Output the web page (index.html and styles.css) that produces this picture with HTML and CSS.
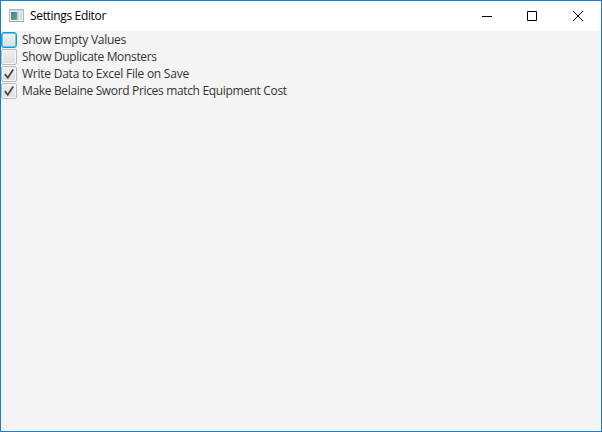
FILE: index.html
```html
<!DOCTYPE html>
<html lang="en">
<head>
<meta charset="utf-8">
<title>Settings Editor</title>
<link rel="stylesheet" href="styles.css">
</head>
<body>
<div class="window">
  <header class="titlebar">
    <svg class="app-icon" width="16" height="14" viewBox="0 0 16 14">
      <defs>
        <linearGradient id="screen" x1="0" y1="0" x2="1" y2="1">
          <stop offset="0" stop-color="#4c78a8"/>
          <stop offset="1" stop-color="#55b07c"/>
        </linearGradient>
      </defs>
      <rect x="0.5" y="0.5" width="14" height="12" fill="#f4f4f4" stroke="#b4b7ba"/>
      <rect x="1" y="1" width="13" height="1.5" fill="#d5d8db"/>
      <rect x="2" y="3" width="6" height="8" fill="url(#screen)"/>
      <rect x="8" y="3" width="2" height="8" fill="#c5d3df"/>
      <rect x="11" y="3" width="2" height="8" fill="#d5dade"/>
      <rect x="0" y="12" width="15" height="1" fill="#a4a7aa"/>
    </svg>
    <h1 class="title">Settings Editor</h1>
    <div class="controls">
      <button class="control" aria-label="Minimize"><svg width="10" height="10" viewBox="0 0 10 10"><path d="M0 5.5H10"/></svg></button>
      <button class="control" aria-label="Maximize"><svg width="10" height="10" viewBox="0 0 10 10"><path d="M.5 .5H9.5V9.5H.5Z"/></svg></button>
      <button class="control close" aria-label="Close"><svg width="10" height="10" viewBox="0 0 10 10"><path d="M0 0L10 10M10 0L0 10"/></svg></button>
    </div>
  </header>
  <main class="settings">
    <div class="option"><span class="box focused"></span><span class="label empty-values">Show Empty Values</span></div>
    <div class="option"><span class="box"></span><span class="label duplicates">Show Duplicate Monsters</span></div>
    <div class="option"><span class="box"><svg width="12" height="12" viewBox="0 0 12 12"><path d="M1.8 6.2L4.8 9.8L10.2 1.4"/></svg></span><span class="label excel">Write Data to Excel File on Save</span></div>
    <div class="option"><span class="box"><svg width="12" height="12" viewBox="0 0 12 12"><path d="M1.8 6.2L4.8 9.8L10.2 1.4"/></svg></span><span class="label prices">Make Belaine Sword Prices match Equipment Cost</span></div>
  </main>
</div>
</body>
</html>
```
FILE: styles.css
```css
* { box-sizing: border-box; }
body { margin: 0; font: 12px "Open Sans", "Noto Sans", sans-serif; }
.window {
  width: 602px;
  height: 432px;
  display: flex;
  flex-direction: column;
  border: 1px solid #1a7fd2;
  background: #f4f4f4;
}
.titlebar {
  height: 30px;
  flex: none;
  display: flex;
  align-items: center;
  padding-left: 8px;
  background: #fff;
}
.title { margin: 0 0 0 5px; font-size: 12px; font-weight: 400; line-height: 16px; color: #000; white-space: nowrap; letter-spacing: -0.34px; }
.controls { margin: -1px 1px 0 auto; display: flex; }
.control {
  width: 45px;
  height: 28px;
  padding: 0;
  border: 0;
  background: none;
  display: flex;
  align-items: center;
  justify-content: center;
}
.close { margin-left: 1px; }
.control svg { fill: none; stroke: #000; stroke-width: 1; }
.settings { display: flex; flex-direction: column; }
.option { height: 17px; display: flex; align-items: flex-end; }
.box {
  width: 16px;
  height: 16px;
  border: 1px solid #bababa;
  border-radius: 2px;
  background: linear-gradient(#f0f0f0, #dedede);
  box-shadow: inset 0 0 0 1px #f5f5f5;
  display: flex;
  align-items: center;
  justify-content: center;
}
.box.focused { border-color: #039ed3; box-shadow: inset 0 0 0 1px #73c6e2; border-radius: 3px; }
.box svg { fill: none; stroke: #4a4a4a; stroke-width: 1.8; }
.label { margin-left: 5px; line-height: 17px; color: #333; white-space: nowrap; }
.empty-values { letter-spacing: -0.29px; }
.duplicates { letter-spacing: -0.33px; }
.excel { letter-spacing: -0.24px; }
.prices { letter-spacing: -0.34px; }
```
